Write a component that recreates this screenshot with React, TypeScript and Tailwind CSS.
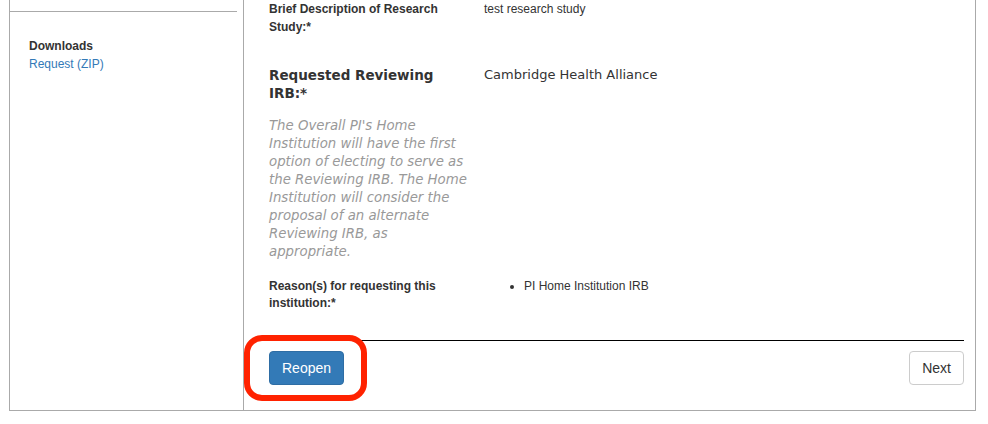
import React from "react";

const helv = { fontFamily: '"Liberation Sans", Arial, sans-serif' };
const verd = { fontFamily: '"DejaVu Sans", Verdana, sans-serif' };

export default function App() {
  return (
    <div className="relative w-[988px] h-[424px] bg-white overflow-hidden text-[#333]" style={helv}>
      <div className="ml-[9px] w-[967px] h-[411px] border-l border-r border-b border-[#aaa] flex">
        <aside className="w-[234px] shrink-0 border-r border-[#aaa]">
          <div className="h-[12px] w-[227px] border-b border-[#aaa]" />
          <div className="mt-[25px] pl-[19px] text-[12px] leading-[18px]">
            <div className="font-bold text-[#333]">Downloads</div>
            <a className="text-[#337ab7]">Request (ZIP)</a>
          </div>
        </aside>
        <main className="flex-1 pl-[25px] pr-[11px] flex flex-col">
          <div className="grid grid-cols-[200px_1fr] gap-x-[15px] text-[12px] leading-[18px]">
            <div className="font-bold">Brief Description of Research Study:*</div>
            <div>test research study</div>
          </div>
          <div className="mt-[30px] grid grid-cols-[200px_1fr] gap-x-[15px]" style={verd}>
            <div>
              <div className="text-[13.5px] leading-[18px] font-bold">
                Requested Reviewing
                <br />
                IRB:*
              </div>
              <p className="mt-[15px] text-[13.3px] leading-[18px] italic text-[#999]">
                The Overall PI's Home Institution will have the first option of electing to serve as the Reviewing IRB. The Home Institution will consider the proposal of an alternate Reviewing IRB, as appropriate.
              </p>
            </div>
            <div className="text-[13px] leading-[18px]">Cambridge Health Alliance</div>
          </div>
          <div className="mt-[17px] grid grid-cols-[200px_1fr] gap-x-[15px] text-[12px] leading-[17px]">
            <div className="font-bold">Reason(s) for requesting this institution:*</div>
            <ul className="list-disc pl-[40px]">
              <li>PI Home Institution IRB</li>
            </ul>
          </div>
          <div className="mt-[28px] border-t border-black pt-[10px] flex justify-between">
            <button className="h-[34px] px-[12px] rounded-[4px] bg-[#337ab7] border border-[#2e6da4] text-white text-[14px]" style={helv}>
              Reopen
            </button>
            <button className="h-[34px] px-[12px] rounded-[4px] bg-white border border-[#ccc] text-[#333] text-[14px]" style={helv}>
              Next
            </button>
          </div>
        </main>
      </div>
      <div className="absolute left-[244px] top-[335px] w-[123px] h-[66px] border-[6px] border-[#ff2200] rounded-[18px] pointer-events-none" />
    </div>
  );
}
